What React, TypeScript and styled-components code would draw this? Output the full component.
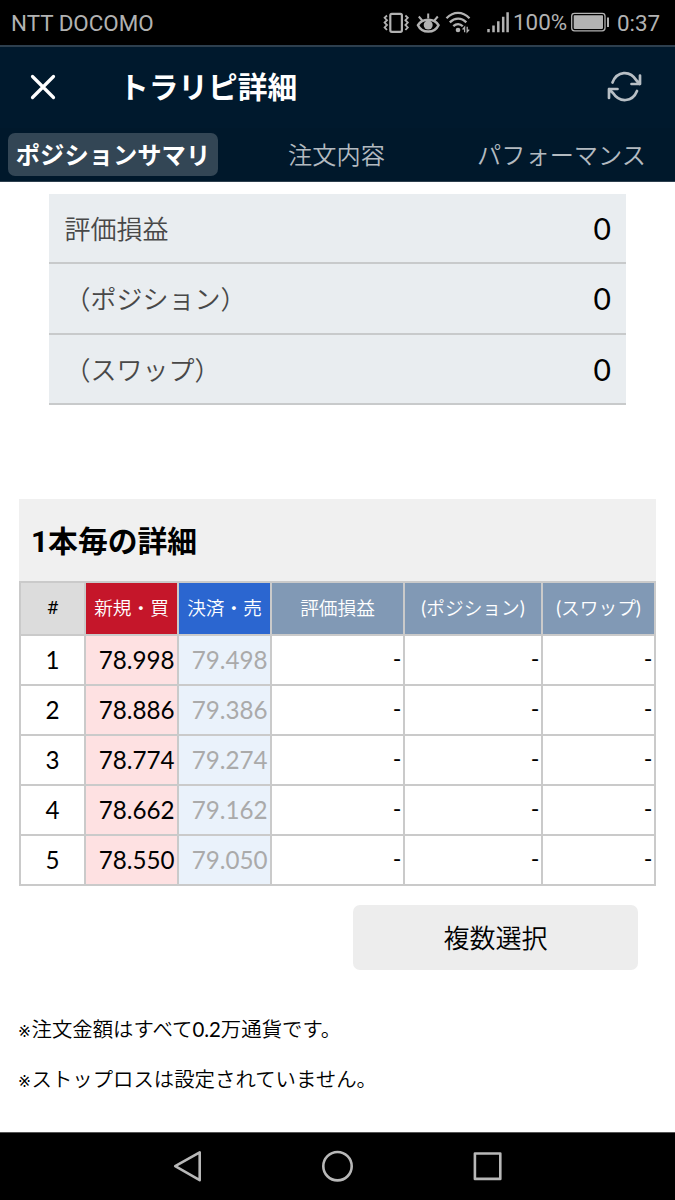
import React from "react";
import styled, { createGlobalStyle, css } from "styled-components";

const textFont = `Lato, "Noto Sans CJK JP DemiLight", "Noto Sans CJK JP", sans-serif`;
const boldFont = `Lato, "Noto Sans CJK JP", sans-serif`;

const GlobalStyle = createGlobalStyle`
  * { box-sizing: border-box; }
  body {
    margin: 0;
    background: #fff;
    font-family: ${textFont};
    color: #000;
  }
`;

const Screen = styled.div`
  width: 675px;
  height: 1200px;
  display: flex;
  flex-direction: column;
  overflow: hidden;
`;

const StatusBar = styled.div`
  height: 47px;
  flex: none;
  display: flex;
  align-items: flex-start;
  background: #000;
  border-bottom: 2px solid #2d3f4e;
  padding: 0 0 0 11px;
  color: #b2b2b2;
  font: 400 22.4px/46px Roboto, sans-serif;
  white-space: nowrap;
`;

const StatusIcons = styled.svg`
  margin-left: auto;
  flex: none;
`;

const Percent = styled.span`
  width: 57px;
  padding-left: 1px;
  line-height: 44px;
`;

const Battery = styled.svg`
  flex: none;
`;

const Clock = styled.span`
  width: 62px;
  padding-left: 4px;
  line-height: 47px;
`;

const Header = styled.header`
  height: 81px;
  flex: none;
  display: flex;
  align-items: center;
  background: #00192d;
  padding: 0 32px 1px 29px;
`;

const Title = styled.h1`
  margin: 0 auto 0 62px;
  color: #fff;
  font-family: ${boldFont};
  font-size: 29.7px;
  line-height: 44px;
  font-weight: 700;
`;

const Tabs = styled.nav`
  height: 54px;
  flex: none;
  display: grid;
  grid-template-columns: 210px 237px 213px;
  background: #00182b;
  border-bottom: 1px solid #2d3f4e;
  padding: 5px 7px 0 8px;
`;

const Tab = styled.div<{ $active?: boolean }>`
  height: 43px;
  border-radius: 7px;
  font-size: 24.2px;
  line-height: 44px;
  color: #b3bac0;
  text-align: center;
  white-space: nowrap;
  ${(p) =>
    p.$active &&
    css`
      background: #334655;
      color: #fff;
      font-family: ${boldFont};
      font-size: 24.3px;
      font-weight: 700;
    `}
`;

const Content = styled.main`
  flex: 1;
  display: flex;
  flex-direction: column;
  padding: 12px 19px 0;
`;

const Summary = styled.div`
  width: 577px;
  margin-left: 30px;
`;

const SummaryRow = styled.div`
  height: 70.4px;
  display: flex;
  justify-content: space-between;
  background: #e9edf0;
  border-bottom: 2px solid #c8cacb;
  padding: 0 15px 0 15.5px;
  line-height: 70px;
  font-size: 26px;
`;

const SummaryLabel = styled.span`
  color: #484848;
`;

const SummaryValue = styled.span`
  font-size: 30px;
  line-height: 68px;
`;

const DetailTitle = styled.h2`
  margin: 93.8px 0 0;
  height: 82px;
  background: #f0f0f0;
  padding-left: 12px;
  font-family: ${boldFont};
  font-size: 29.8px;
  line-height: 83px;
  font-weight: 700;
`;

const TitleCount = styled.span`
  font-family: Roboto, sans-serif;
`;

const Grid = styled.div`
  width: 637px;
  display: grid;
  grid-template-columns: 63px 91px 91px 131px 136px 111px;
  grid-template-rows: 51px repeat(5, 48px);
  gap: 2px;
  padding: 2px;
  background: #cacaca;
`;

const headTones = {
  index: "#dcdcdc",
  buy: "#c5162a",
  sell: "#2b66d0",
  value: "#8199b5",
};

const HeadCell = styled.div<{ $tone: keyof typeof headTones }>`
  background: ${(p) => headTones[p.$tone]};
  color: ${(p) => (p.$tone === "index" ? "#000" : "#fff")};
  font-family: ${(p) => (p.$tone === "index" ? "Roboto, sans-serif" : textFont)};
  font-size: 18.7px;
  line-height: 51px;
  text-align: center;
  white-space: nowrap;
`;

const cellTones = {
  index: "#fff",
  buy: "#fee1e2",
  sell: "#eaf2fb",
  value: "#fff",
};

const Cell = styled.div<{ $tone: keyof typeof cellTones }>`
  background: ${(p) => cellTones[p.$tone]};
  color: ${(p) => (p.$tone === "sell" ? "#aaa" : "#000")};
  font-family: ${(p) => (p.$tone === "value" ? "Roboto, sans-serif" : textFont)};
  font-size: 24.2px;
  line-height: 47px;
  text-align: ${(p) => (p.$tone === "index" ? "center" : "right")};
  padding-right: ${(p) => (p.$tone === "index" ? 0 : 2.5)}px;
`;

const MultiSelect = styled.button`
  width: 285px;
  height: 65px;
  margin: 19px 18px 0 auto;
  flex: none;
  border: 0;
  border-radius: 7px;
  background: #ededed;
  color: #000;
  font: 400 26px/66px ${textFont};
  padding: 0;
`;

const Notes = styled.div`
  margin-top: 34px;
  font-size: 20.4px;
  line-height: 50px;
`;

const Note = styled.p`
  margin: 0;
  height: 50px;
`;

const NoteMark = styled.span`
  display: inline-block;
  width: 12.5px;
  font: 400 15.5px/20px "DejaVu Sans", sans-serif;
  text-indent: -1px;
`;

const NavBar = styled.footer`
  height: 68px;
  flex: none;
  background: #000;
  border-top: 1px solid #555;
`;

const rows = [
  ["78.998", "79.498"],
  ["78.886", "79.386"],
  ["78.774", "79.274"],
  ["78.662", "79.162"],
  ["78.550", "79.050"],
];

export default function App() {
  return (
    <>
      <GlobalStyle />
      <Screen>
        <StatusBar>
          <span>NTT DOCOMO</span>
          <StatusIcons width="131" height="45" viewBox="381 0 131 45" fill="none" stroke="#b2b2b2">
            <rect x="390.3" y="13.8" width="11.6" height="18" rx="1.5" strokeWidth="2.2" />
            <path
              d="M387 15.5l-2.4 2.3 2.4 2.4-2.4 2.4 2.4 2.4-2.4 2.4 2.4 2.6M405.4 15.5l2.4 2.3-2.4 2.4 2.4 2.4-2.4 2.4 2.4 2.4-2.4 2.6"
              strokeWidth="1.8"
            />
            <path
              d="M418 25.2C422 17.8 434.5 17.8 438.5 25.2C434.5 33.7 422 33.7 418 25.2Z"
              strokeWidth="2.5"
            />
            <path d="M428.2 13.5v5M418.8 16.5l3.4 4M437.8 16.5l-3.4 4" strokeWidth="2" />
            <circle cx="428.2" cy="25" r="4.5" fill="#b2b2b2" stroke="none" />
            <path
              d="M446.5 18.3C453.5 11.2 462.5 11.2 469.5 18.3M449.8 22.4C455 17.3 461.3 17.3 466.3 22.4M453.3 26.2C456.3 23.3 460 23.3 462.8 26.2"
              strokeWidth="2.3"
            />
            <circle cx="458" cy="30" r="2.3" fill="#b2b2b2" stroke="none" />
            <path d="M464.6 32.3v-5l-2 2.2M467.2 26.8v5l2-2.2" strokeWidth="1.3" />
            <path d="M488.5 29v3.3M493.5 25.5v6.8M498.3 21.2v11.1M503.2 16.7v15.6M507.6 12.3v20" strokeWidth="2.5" />
          </StatusIcons>
          <Percent>100%</Percent>
          <Battery width="44" height="45" viewBox="570 0 44 45" fill="none" stroke="#b2b2b2">
            <rect x="572.7" y="13.3" width="33.3" height="17.6" rx="2.8" strokeWidth="1.3" />
            <rect x="574.7" y="15.3" width="29.3" height="13.6" rx="0.8" fill="#b2b2b2" stroke="none" />
            <path d="M609 17.5v9.5" strokeWidth="2" />
          </Battery>
          <Clock>0:37</Clock>
        </StatusBar>
        <Header>
          <svg width="28" height="28" viewBox="0 0 28 28" fill="none" stroke="#fff" strokeWidth="3.2" strokeLinecap="round">
            <path d="M3.5 3.5l21 21M24.5 3.5l-21 21" />
          </svg>
          <Title>トラリピ詳細</Title>
          <svg width="36" height="32" viewBox="607 71 36 32" fill="none" stroke="#b8bfc5" strokeWidth="2.7" strokeLinecap="round" strokeLinejoin="round">
            <path d="M612.5 82.5C617 70.8 630 69.8 636.5 80.5L639.8 84M640 75.5V84H631.5" />
            <path d="M637 91C632.5 102.3 619.5 103 613 93L609 89.2M609 98V89H617.5" />
          </svg>
        </Header>
        <Tabs>
          <Tab $active>ポジションサマリ</Tab>
          <Tab>注文内容</Tab>
          <Tab>パフォーマンス</Tab>
        </Tabs>
        <Content>
          <Summary>
            {["評価損益", "（ポジション）", "（スワップ）"].map((label) => (
              <SummaryRow key={label}>
                <SummaryLabel>{label}</SummaryLabel>
                <SummaryValue>0</SummaryValue>
              </SummaryRow>
            ))}
          </Summary>
          <DetailTitle>
            <TitleCount>1</TitleCount>本毎の詳細
          </DetailTitle>
          <Grid>
            <HeadCell $tone="index">#</HeadCell>
            <HeadCell $tone="buy">新規・買</HeadCell>
            <HeadCell $tone="sell">決済・売</HeadCell>
            <HeadCell $tone="value">評価損益</HeadCell>
            <HeadCell $tone="value">(ポジション)</HeadCell>
            <HeadCell $tone="value">(スワップ)</HeadCell>
            {rows.map(([buy, sell], i) => (
              <React.Fragment key={buy}>
                <Cell $tone="index">{i + 1}</Cell>
                <Cell $tone="buy">{buy}</Cell>
                <Cell $tone="sell">{sell}</Cell>
                <Cell $tone="value">-</Cell>
                <Cell $tone="value">-</Cell>
                <Cell $tone="value">-</Cell>
              </React.Fragment>
            ))}
          </Grid>
          <MultiSelect>複数選択</MultiSelect>
          <Notes>
            <Note>
              <NoteMark>※</NoteMark>注文金額はすべて0.2万通貨です。
            </Note>
            <Note>
              <NoteMark>※</NoteMark>ストップロスは設定されていません。
            </Note>
          </Notes>
        </Content>
        <NavBar>
          <svg width="675" height="67" viewBox="0 1133 675 67" fill="none" stroke="#b8b8b8" strokeWidth="2.6" strokeLinejoin="round">
            <path d="M199.7 1152.3V1180.2L175.2 1166.2Z" />
            <circle cx="337.5" cy="1166.2" r="14.2" />
            <rect x="474.9" y="1153.5" width="25.4" height="25.4" />
          </svg>
        </NavBar>
      </Screen>
    </>
  );
}
